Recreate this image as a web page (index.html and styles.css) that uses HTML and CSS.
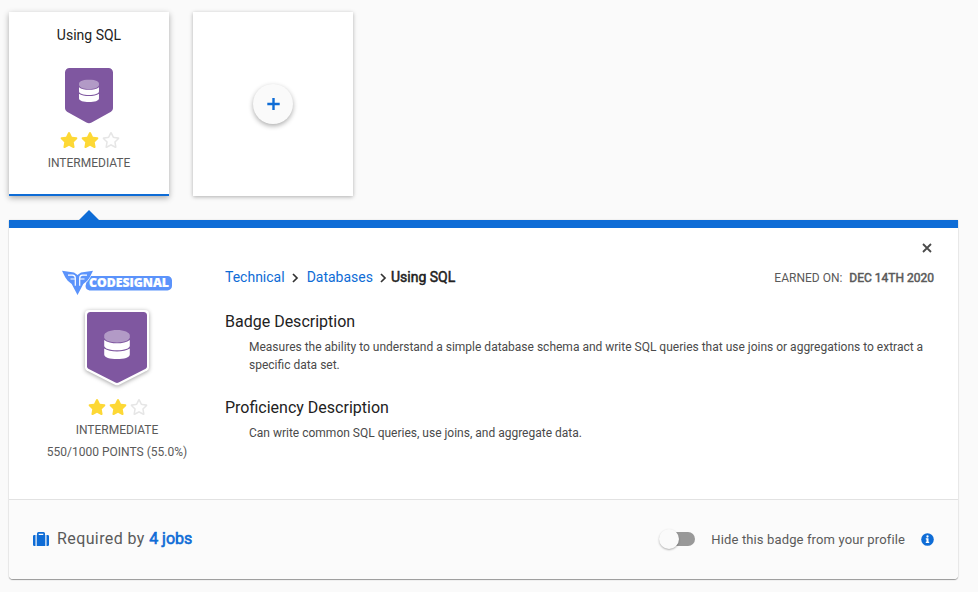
FILE: index.html
```html
<!DOCTYPE html>
<html lang="en">
<head>
<meta charset="utf-8">
<title>Badges</title>
<link rel="stylesheet" href="styles.css">
</head>
<body>
<svg class="defs" aria-hidden="true">
  <symbol id="star" viewBox="0 0 576 512"><path d="M259.3 17.8L194 150.2 47.9 171.5c-26.2 3.8-36.7 36.1-17.7 54.6l105.7 103-25 145.5c-4.5 26.3 23.2 46 46.4 33.7L288 439.6l130.7 68.7c23.2 12.2 50.9-7.4 46.4-33.7l-25-145.5 105.7-103c19-18.5 8.5-50.8-17.7-54.6L382 150.2 316.7 17.8c-11.7-23.6-45.6-23.9-57.4 0z"/></symbol>
  <symbol id="star-outline" viewBox="0 0 576 512"><path d="M528.1 171.5L382 150.2 316.7 17.8c-11.7-23.6-45.6-23.9-57.4 0L194 150.2 47.9 171.5c-26.2 3.8-36.7 36.1-17.7 54.6l105.7 103-25 145.5c-4.5 26.3 23.2 46 46.4 33.7L288 439.6l130.7 68.7c23.2 12.2 50.9-7.4 46.4-33.7l-25-145.5 105.7-103c19-18.5 8.5-50.8-17.7-54.6zM388.6 312.3l23.7 138.4L288 385.4l-124.3 65.3 23.7-138.4-100.6-98 139-20.2 62.2-126 62.2 126 139 20.2-100.6 98z"/></symbol>
  <symbol id="database" viewBox="0 0 26 30">
    <path opacity=".4" d="M0 5.5C0 2.5 5.800 0 13 0s13 2.500 13 5.500v1.800c0 3-5.800 5.300-13 5.300S0 10.300 0 7.300z"/>
    <path d="M0 10.200c2.800 2.300 7.800 3.400 13 3.400s10.200-1.100 13-3.400v5.700c0 2.800-5.800 4.600-13 4.600S0 18.700 0 15.900z"/>
    <path d="M0 18.800c2.800 2 7.800 3 13 3s10.200-1 13-3v6c0 2.900-5.800 4.700-13 4.700S0 27.700 0 24.800z"/>
  </symbol>
</svg>

<section class="cards">
  <article class="card selected">
    <h2 class="card-title">Using SQL</h2>
    <svg class="badge" width="48" height="56" viewBox="0 0 48 56">
      <path fill="#7f57a0" d="M4.500 0h39A4.500 4.500 0 0 1 48 4.500v35.800q0 2.300-2 3.500L26.600 54.600q-2.600 1.300-5.200 0L2 43.800Q0 42.600 0 40.300V4.500A4.500 4.500 0 0 1 4.500 0z"/>
      <use href="#database" x="14" y="11.400" width="20" height="23" fill="#fff"/>
    </svg>
    <div class="stars">
      <svg><use href="#star"/></svg><svg><use href="#star"/></svg><svg class="empty"><use href="#star-outline"/></svg>
    </div>
    <div class="level">INTERMEDIATE</div>
  </article>
  <article class="card add">
    <button class="add-button" aria-label="Add">
      <svg width="13" height="12" viewBox="0 0 13 12"><path d="M6.500 0v12M.3 6h12.400" stroke="#0e6cd6" stroke-width="2.400"/></svg>
    </button>
  </article>
</section>

<section class="panel">
  <div class="panel-body">
    <aside class="summary">
      <svg class="logo" width="112" height="26" viewBox="0 0 112 26">
        <path fill="#5b93fb" d="M26 6h79.500a4.500 4.500 0 0 1 4.500 4.500v5.400a4.500 4.500 0 0 1-4.500 4.500H27.500q-4-1-4-4.500z"/>
        <path fill="#5b93fb" stroke="#fff" stroke-width="1.200" paint-order="stroke" d="M0 .7l12 1.800 3.500 2.500L19 2.500 31 .7l-3.200 6.500-2.500 3.600-4 3.200L15.500 25 9.700 14l-4-3.200-2.500-3.600z"/>
        <path fill="none" stroke="#fff" stroke-width="1.200" d="M6 5.200h4.500q2.800.2 2.800 3v7.500M8.500 9h4.800M25 5.200h-4.500q-2.800.2-2.800 3v7.500M22.500 9h-4.800"/>
        <text x="27" y="17.300" textLength="80" lengthAdjust="spacingAndGlyphs" class="logo-text">CODESIGNAL</text>
      </svg>
      <svg class="badge-large" width="64" height="76" viewBox="0 0 64 76">
        <path fill="#fff" d="M4 0h56a4 4 0 0 1 4 4v53.500q0 2-1.800 3L34.200 74.800q-2.200 1.100-4.400 0L1.800 60.500Q0 59.500 0 57.500V4a4 4 0 0 1 4-4z"/>
        <path fill="#7f57a0" d="M5.500 2h53A3.500 3.500 0 0 1 62 5.500v51q0 1.500-1.300 2.200L33.600 72.500q-1.600.8-3.200 0L3.300 58.700Q2 58 2 56.500v-51A3.500 3.500 0 0 1 5.500 2z"/>
        <use href="#database" x="19" y="20" width="26" height="29.500" fill="#fff"/>
      </svg>
      <div class="stars">
        <svg><use href="#star"/></svg><svg><use href="#star"/></svg><svg class="empty"><use href="#star-outline"/></svg>
      </div>
      <div class="level">INTERMEDIATE</div>
      <div class="points">550/1000 POINTS (55.0%)</div>
    </aside>
    <div class="details">
      <button class="close" aria-label="Close"><svg width="10" height="10" viewBox="0 0 10 10"><path d="M1 1l8 8M9 1L1 9" stroke="#4a4a4a" stroke-width="1.800"/></svg></button>
      <div class="top-line">
        <nav class="crumbs">
          <a>Technical</a>
          <svg class="chevron" width="7" height="10" viewBox="0 0 7 10"><path d="M1 1l4 4-4 4"/></svg>
          <a>Databases</a>
          <svg class="chevron last" width="7" height="10" viewBox="0 0 7 10"><path d="M1 1l4 4-4 4"/></svg>
          <span class="current">Using SQL</span>
        </nav>
        <div class="earned">EARNED ON: <span class="date">DEC 14TH 2020</span></div>
      </div>
      <h3>Badge Description</h3>
      <p>Measures the ability to understand a simple database schema and write SQL queries that use joins or aggregations to extract a specific data set.</p>
      <h3>Proficiency Description</h3>
      <p>Can write common SQL queries, use joins, and aggregate data.</p>
    </div>
  </div>
  <footer class="panel-footer">
    <svg class="suitcase" width="16" height="14" viewBox="0 0 16 14" fill="#0e6cd6"><path d="M0 4.300Q0 3 1.300 3H2.500v11H1.300Q0 14 0 12.700zM13.500 3h1.200Q16 3 16 4.300v8.400q0 1.300-1.300 1.300h-1.200z"/><path fill-rule="evenodd" d="M4 3V1.500Q4 0 5.500 0h5Q12 0 12 1.500V3h.3v11H3.700V3zM5.700 1.700V3h4.600V1.700z"/></svg>
    <div class="required">Required by <span class="jobs">4 jobs</span></div>
    <div class="toggle"><span class="knob"></span></div>
    <div class="hide-label">Hide this badge from your profile</div>
    <svg class="info" width="13" height="13" viewBox="0 0 13 13"><circle cx="6.500" cy="6.500" r="6.300" fill="#0e6cd6"/><circle cx="6.500" cy="3.500" r="1.150" fill="#fff"/><path fill="#fff" d="M4.800 5.300h2.700v3.500h.7V10H4.800V8.800h.7V6.500h-.7z"/></svg>
  </footer>
</section>
</body>
</html>
```
FILE: styles.css
```css
* { box-sizing: border-box; }
body {
  margin: 0;
  padding: 12px 20px 0 9px;
  height: 592px;
  overflow: hidden;
  background: #fafafa;
  color: #222;
  font-family: Roboto, "Liberation Sans", sans-serif;
}
.defs { position: absolute; width: 0; height: 0; }
button { border: 0; padding: 0; background: none; display: flex; align-items: center; justify-content: center; }
h2, h3, p { margin: 0; font-weight: 400; }

.cards { display: flex; gap: 24px; }
.card {
  width: 160px;
  height: 184px;
  background: #fff;
  display: flex;
  flex-direction: column;
  align-items: center;
  box-shadow: 0 1px 4px rgba(0, 0, 0, .3);
}
.selected { border-bottom: 2px solid #0e6cd6; box-shadow: 0 2px 6px rgba(0, 0, 0, .32); }
.card-title { margin-top: 13px; font-size: 14px; line-height: 20px; }
.badge { display: block; margin-top: 23px; }
.stars { display: flex; gap: 3px; height: 16px; }
.stars svg { display: block; width: 18px; height: 16px; fill: #fdd835; }
.stars .empty { fill: #e6e6e6; }
.card .stars { margin: 8px 0 0 2px; }
.level, .points { font-size: 12px; line-height: 16px; color: #5a5a5a; white-space: nowrap; }
.card .level { margin-top: 7px; }
.add { justify-content: center; }
.add-button {
  width: 40px;
  height: 40px;
  border-radius: 50%;
  background: #fafafa;
  box-shadow: 0 2px 5px rgba(0, 0, 0, .32);
}

.panel {
  position: relative;
  margin-top: 24px;
  height: 359px;
  border-top: 8px solid #0e6cd6;
  border-radius: 0 0 4px 4px;
  background: #fff;
  box-shadow: 0 1px 1px rgba(0, 0, 0, .38), 0 0 2px rgba(0, 0, 0, .14);
}
.panel::before {
  content: "";
  position: absolute;
  left: 70px;
  top: -18px;
  border: 10px solid transparent;
  border-top: 0;
  border-bottom-color: #0e6cd6;
}
.panel-body { display: flex; height: 271px; }
.summary { width: 216px; flex: none; display: flex; flex-direction: column; align-items: center; padding-top: 42px; }
.logo { display: block; margin-left: 2px; }
.logo-text { font: 800 12px "Open Sans", sans-serif; fill: #fff; stroke: #fff; stroke-width: .2px; }
.badge-large { display: block; margin-top: 14px; overflow: visible; filter: drop-shadow(0 1px 2px rgba(0, 0, 0, .36)); }
.summary .stars { margin: 13px 0 0 2px; }
.summary .level { margin-top: 7px; }
.points { margin-top: 6px; }

.details { position: relative; flex: 1; padding: 39px 24px 0 0; }
.close { position: absolute; right: 26px; top: 15px; width: 10px; height: 10px; }
.top-line { display: flex; justify-content: space-between; height: 20px; }
.crumbs { display: flex; align-items: center; font-size: 14px; line-height: 20px; }
.crumbs a { color: #0e6cd6; }
.chevron { margin: 1px 7.500px 0 7.500px; fill: none; stroke: #333; stroke-width: 1.7; }
.chevron.last { margin-right: 3.500px; }
.current { -webkit-text-stroke: .5px #222; }
.earned { font-size: 12px; line-height: 22px; color: #5a5a5a; }
.date { margin-left: 4px; -webkit-text-stroke: .5px #5a5a5a; }
h3 { font-size: 16px; line-height: 24px; margin-top: 23px; }
p { margin: 4px 0 0 24px; font-size: 12px; line-height: 18px; color: #4a4a4a; }
p + h3 { margin-top: 22px; }

.panel-footer {
  display: flex;
  align-items: center;
  height: 80px;
  padding: 0 24px 1px;
  border-top: 1px solid #e2e2e2;
  border-radius: 0 0 4px 4px;
  background: #fbfbfb;
  color: #5a5a5a;
}
.required { margin-left: 8px; font-size: 16px; line-height: 20px; letter-spacing: .4px; }
.jobs { color: #0e6cd6; letter-spacing: 0; -webkit-text-stroke: .6px #0e6cd6; }
.toggle { position: relative; margin-left: auto; width: 32px; height: 14px; border-radius: 7px; background: #999; }
.knob {
  position: absolute;
  left: -4px;
  top: -3px;
  width: 20px;
  height: 20px;
  border-radius: 50%;
  background: #fafafa;
  box-shadow: 0 1px 2px rgba(0, 0, 0, .3);
}
.hide-label { margin: 0 16px; padding-top: 2px; font-size: 13px; line-height: 16px; letter-spacing: .13px; }
```
